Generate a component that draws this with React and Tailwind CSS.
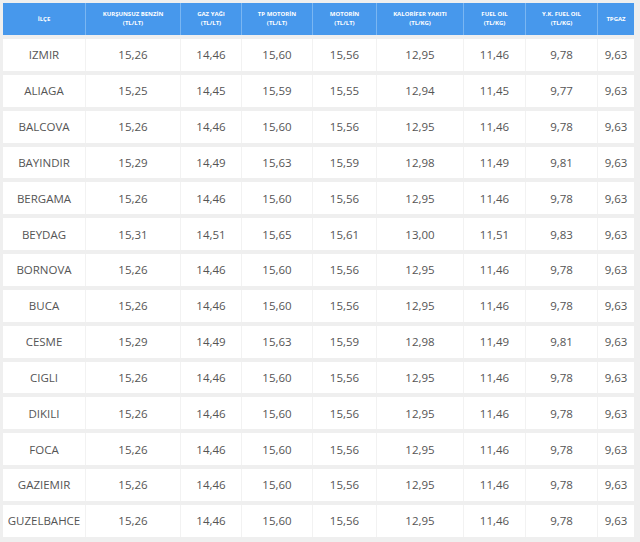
const COLS = "grid grid-cols-[82px_95px_61px_71px_64px_87px_62px_72px_37px]";

const HEADERS = [
  ["İLÇE"],
  ["KURŞUNSUZ BENZİN", "(TL/LT)"],
  ["GAZ YAĞI", "(TL/LT)"],
  ["TP MOTORİN", "(TL/LT)"],
  ["MOTORİN", "(TL/LT)"],
  ["KALORİFER YAKITI", "(TL/KG)"],
  ["FUEL OIL", "(TL/KG)"],
  ["Y.K. FUEL OIL", "(TL/KG)"],
  ["TPGAZ"],
];

const ROWS = [
  ["IZMIR", "15,26", "14,46", "15,60", "15,56", "12,95", "11,46", "9,78", "9,63"],
  ["ALIAGA", "15,25", "14,45", "15,59", "15,55", "12,94", "11,45", "9,77", "9,63"],
  ["BALCOVA", "15,26", "14,46", "15,60", "15,56", "12,95", "11,46", "9,78", "9,63"],
  ["BAYINDIR", "15,29", "14,49", "15,63", "15,59", "12,98", "11,49", "9,81", "9,63"],
  ["BERGAMA", "15,26", "14,46", "15,60", "15,56", "12,95", "11,46", "9,78", "9,63"],
  ["BEYDAG", "15,31", "14,51", "15,65", "15,61", "13,00", "11,51", "9,83", "9,63"],
  ["BORNOVA", "15,26", "14,46", "15,60", "15,56", "12,95", "11,46", "9,78", "9,63"],
  ["BUCA", "15,26", "14,46", "15,60", "15,56", "12,95", "11,46", "9,78", "9,63"],
  ["CESME", "15,29", "14,49", "15,63", "15,59", "12,98", "11,49", "9,81", "9,63"],
  ["CIGLI", "15,26", "14,46", "15,60", "15,56", "12,95", "11,46", "9,78", "9,63"],
  ["DIKILI", "15,26", "14,46", "15,60", "15,56", "12,95", "11,46", "9,78", "9,63"],
  ["FOCA", "15,26", "14,46", "15,60", "15,56", "12,95", "11,46", "9,78", "9,63"],
  ["GAZIEMIR", "15,26", "14,46", "15,60", "15,56", "12,95", "11,46", "9,78", "9,63"],
  ["GUZELBAHCE", "15,26", "14,46", "15,60", "15,56", "12,95", "11,46", "9,78", "9,63"],
];

export default function App() {
  return (
    <div
      className="w-[640px] h-[542px] bg-[#efefef] pt-[3px] pl-[3px] overflow-hidden"
      style={{ fontFamily: '"Open Sans", "Liberation Sans", sans-serif' }}
    >
      <div className="flex flex-col gap-[4px] w-[631px]">
        {/* Header */}
        <div className={`${COLS} h-[32px] bg-[#4798ec]`}>
          {HEADERS.map((lines, i) => (
            <div
              key={i}
              className={`flex flex-col items-center justify-center text-center text-white font-bold text-[6px] leading-[9px] ${
                i > 0 ? "border-l border-[#7ab6f2]" : ""
              }`}
            >
              {lines.map((l) => (
                <span key={l}>{l}</span>
              ))}
            </div>
          ))}
        </div>

        {/* Rows */}
        {ROWS.map((row) => (
          <div key={row[0]} className={`${COLS} h-[31.85px] bg-white`}>
            {row.map((cell, i) => (
              <div
                key={i}
                className={`flex items-center justify-center text-[11.5px] text-[#555] ${
                  i > 0 ? "border-l border-[#f2f2f2]" : ""
                }`}
              >
                {cell}
              </div>
            ))}
          </div>
        ))}
      </div>
    </div>
  );
}
